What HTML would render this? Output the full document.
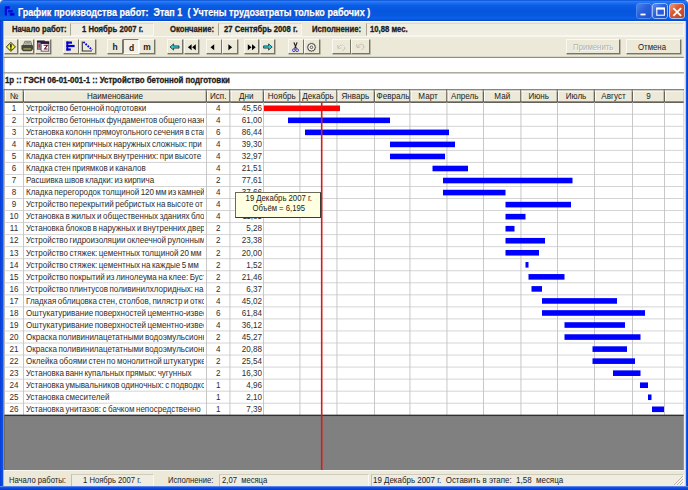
<!DOCTYPE html>
<html lang="ru"><head><meta charset="utf-8"><title>График производства работ</title>
<style>
html,body{margin:0;padding:0;}
body{width:688px;height:490px;overflow:hidden;background:#fff;position:relative;font-family:"Liberation Sans",sans-serif;font-size:8px;color:#222;}
.abs{position:absolute;}
.t{position:absolute;white-space:pre;line-height:1;}
#win{position:absolute;left:0;top:0;width:688px;height:490px;background:#ece9d8;border-radius:4px 4px 0 0;overflow:hidden;}
#title{position:absolute;left:0;top:0;width:688px;height:21.3px;background:linear-gradient(to bottom,#0a4ed2 0%,#2d7df2 7%,#1b6ff0 14%,#0b5de6 26%,#0656de 50%,#0757df 72%,#0a60ea 88%,#0747c6 100%);}
.btn{position:absolute;background:#ece9d8;box-sizing:border-box;border-top:1px solid #f9f8f2;border-left:1px solid #f9f8f2;border-right:1px solid #77756a;border-bottom:1px solid #77756a;box-shadow:0.6px 0.6px 0 #9a9888;}
.panel{position:absolute;box-sizing:border-box;}
</style></head><body>
<div id="win">

<div class="abs" style="left:0;top:21px;width:4px;height:469px;background:linear-gradient(to right,#0a3ad6 0,#0a4fe2 50%,#0a4fe2 68%,#7f9fee 72%,#b4c6f2 100%)"></div>
<div class="abs" style="left:683.8px;top:21px;width:4.2px;height:469px;background:linear-gradient(to right,#f2f1ea 0,#e4e8f4 32%,#6a90ec 50%,#0a4fe2 64%,#0a3ad6 100%)"></div>
<div class="abs" style="left:0;top:486px;width:688px;height:4px;background:linear-gradient(to top,#0a36cc 0,#0a4fe2 55%,#1a58e4 72%,#8aa8f0 100%)"></div>
<div id="title"></div>
<svg class="abs" style="left:4px;top:5px" width="12" height="12" viewBox="4 5 12 12"><path d="M4.8 6.2 H9.8 V8.7 H6.9 V15.6 H4.8 Z" fill="#0606dc"/><rect x="8.2" y="10.1" width="4.6" height="2.3" fill="#0606dc"/><rect x="9.8" y="12.9" width="4.6" height="2.8" fill="#0606dc"/></svg>
<div class="t" style="top:6.72px;font-size:10.6px;font-weight:bold;color:#fff;left:17.5px;transform:scaleX(0.855);transform-origin:0 0;text-shadow:0.6px 0.6px 0 #0a2f9a;-webkit-text-stroke:0.25px #fff;">График производства работ:  Этап 1  ( Учтены трудозатраты только рабочих )</div>
<div class="abs" style="left:637.3px;top:4.3px;width:14px;height:14.2px;border-radius:2.5px;background:linear-gradient(135deg,#4f82ec 0%,#2a60dc 45%,#1f50cc 100%);box-shadow:0 0 0 0.8px rgba(255,255,255,0.35);"></div>
<div class="abs" style="left:653.4px;top:4.3px;width:14px;height:14.2px;border-radius:2.5px;background:linear-gradient(135deg,#5f8ff0 0%,#2a60dc 45%,#1f50cc 100%);box-shadow:0 0 0 0.8px rgba(255,255,255,0.75);"></div>
<div class="abs" style="left:669.6px;top:4.3px;width:14px;height:14.2px;border-radius:2.5px;background:linear-gradient(135deg,#ee9a80 0%,#dc5a32 40%,#c0401e 100%);box-shadow:0 0 0 0.8px rgba(255,255,255,0.85);"></div>
<svg class="abs" style="left:636px;top:3px" width="50" height="17" viewBox="0 0 50 17"><rect x="4.5" y="10.6" width="5" height="1.8" fill="#fff"/><rect x="20.8" y="5.2" width="7.6" height="7" fill="none" stroke="#fff" stroke-width="1.1"/><rect x="20.2" y="4.6" width="8.8" height="2" fill="#fff"/><path d="M37.3 5.1 L45.1 12.9 M45.1 5.1 L37.3 12.9" stroke="#fff" stroke-width="1.8"/></svg>
<div class="abs" style="left:3.6px;top:21.3px;width:680.1999999999999px;height:1px;background:#fbfaf6"></div>
<div class="panel" style="left:70px;top:22.8px;width:84px;height:13.4px;background:#f0eee3;border-top:1px solid #dddaca;border-left:1px solid #a8a594;border-right:1px solid #f8f7f0;border-bottom:1px solid #f6f5ee;"></div>
<div class="panel" style="left:218.2px;top:22.8px;width:84px;height:13.4px;background:#f0eee3;border-top:1px solid #dddaca;border-left:1px solid #a8a594;border-right:1px solid #f8f7f0;border-bottom:1px solid #f6f5ee;"></div>
<div class="panel" style="left:366.4px;top:22.8px;width:317.4px;height:13.4px;background:#f0eee3;border-top:1px solid #dddaca;border-left:1px solid #a8a594;border-right:1px solid #f8f7f0;border-bottom:1px solid #f6f5ee;"></div>
<div class="t" style="top:25.00px;font-size:8.8px;font-weight:bold;left:12px;transform:scaleX(0.875);transform-origin:0 0;-webkit-text-stroke:0.3px #1a1a1a;">Начало работ:</div>
<div class="t" style="top:25.00px;font-size:8.8px;font-weight:bold;left:82px;transform:scaleX(0.875);transform-origin:0 0;-webkit-text-stroke:0.3px #1a1a1a;">1 Ноябрь 2007 г.</div>
<div class="t" style="top:25.00px;font-size:8.8px;font-weight:bold;left:169.5px;transform:scaleX(0.875);transform-origin:0 0;-webkit-text-stroke:0.3px #1a1a1a;">Окончание:</div>
<div class="t" style="top:25.00px;font-size:8.8px;font-weight:bold;left:223.5px;transform:scaleX(0.875);transform-origin:0 0;-webkit-text-stroke:0.3px #1a1a1a;">27 Сентябрь 2008 г.</div>
<div class="t" style="top:25.00px;font-size:8.8px;font-weight:bold;left:312px;transform:scaleX(0.875);transform-origin:0 0;-webkit-text-stroke:0.3px #1a1a1a;">Исполнение:</div>
<div class="t" style="top:25.00px;font-size:8.8px;font-weight:bold;left:370px;transform:scaleX(0.875);transform-origin:0 0;-webkit-text-stroke:0.3px #1a1a1a;">10,88 мес.</div>
<div class="abs" style="left:3.6px;top:36.4px;width:680.1999999999999px;height:1px;background:#f7f6ef"></div>
<div class="btn" style="left:3.6px;top:39.2px;width:14.6px;height:15px;"><svg class="abs" style="left:0.3px;top:0.6px" width="13" height="13" viewBox="0 0 13 13"><path d="M5.9 1.4 L10.4 5.9 L5.9 10.4 L1.4 5.9 Z" fill="#f8f640" stroke="#2a2a18" stroke-width="1"/><rect x="5.15" y="3.1" width="1.5" height="3.6" fill="#111"/><rect x="5.15" y="7.4" width="1.5" height="1.4" fill="#111"/></svg></div>
<div class="btn" style="left:18.8px;top:39.2px;width:15.6px;height:15px;"><svg class="abs" style="left:0;top:0" width="15" height="14" viewBox="19.8 40.2 15 14"><path d="M24.6 41.5 L30.6 41.5 L31.6 45.6 L23.2 45.6 Z" fill="#d6d6ce" stroke="#55554c" stroke-width="0.7"/><path d="M25.2 42.8 L30 42.8 M24.8 44.1 L30.6 44.1" stroke="#66665c" stroke-width="0.6"/><path d="M21.2 46.2 Q21.2 45.3 22.2 45.3 L31.8 45.3 Q32.8 45.3 32.8 46.2 L32.8 48.6 Q32.4 51.4 29.6 51.4 L24.4 51.4 Q21.6 51.4 21.2 48.6 Z" fill="#47473e"/><rect x="23" y="48.1" width="8" height="1.9" rx="0.8" fill="#8e9050"/></svg></div>
<div class="btn" style="left:35.2px;top:39.2px;width:16.2px;height:15px;"><svg class="abs" style="left:0;top:0" width="15" height="14" viewBox="36.2 40.2 15 14"><rect x="37.5" y="41.2" width="7.2" height="8.2" fill="#9c8a9c" stroke="#2a2038" stroke-width="0.6"/><rect x="37.2" y="40.9" width="7.8" height="1.8" fill="#14144e"/><rect x="38.8" y="44.3" width="1.2" height="3.4" fill="#d82020"/><rect x="41.3" y="42" width="7.7" height="9.3" fill="#fff" stroke="#2a2038" stroke-width="0.7"/><rect x="41" y="41.7" width="8.3" height="2.4" fill="#30103e"/><path d="M43.8 45.5 L47.6 45.5 L44.8 49.2 L47.8 49.2" fill="none" stroke="#6a1020" stroke-width="1.1"/></svg></div>
<div class="btn" style="left:63px;top:39.2px;width:16px;height:15px;"><svg class="abs" style="left:0;top:0" width="15" height="14" viewBox="64 40.2 15 14"><rect x="66.4" y="41.7" width="1.9" height="9" fill="#0000d4"/><rect x="66.4" y="41.7" width="5.6" height="2.2" fill="#0000d4"/><rect x="66.4" y="45.1" width="8.2" height="2.2" fill="#0000d4"/><rect x="66.4" y="48.6" width="4.4" height="2.2" fill="#0000d4"/></svg></div>
<div class="btn" style="left:79.2px;top:39.2px;width:16.4px;height:15px;"><svg class="abs" style="left:0;top:0" width="15" height="14" viewBox="80.2 40.2 15 14"><path d="M82.5 41.8 L82.5 51.2 L92 51.2" fill="none" stroke="#333" stroke-width="1.1"/><path d="M83.6 42 L92.4 50.2" stroke="#0808d8" stroke-width="1.8" stroke-dasharray="1.8 1.1"/></svg></div>
<div class="btn" style="left:107px;top:39.2px;width:16px;height:15px;"><div class="t" style="top:1.61px;font-size:9.4px;font-weight:bold;left:0px;width:14px;text-align:center;transform:scaleX(0.9);transform-origin:50% 0;">h</div></div>
<div class="btn" style="left:123px;top:39.2px;width:16px;height:15px;border-top:1px solid #7d7b6e;border-left:1px solid #7d7b6e;border-right:1px solid #fff;border-bottom:1px solid #fff;background:#f3f1e7;"><div class="t" style="top:2.61px;font-size:9.4px;font-weight:bold;left:0px;width:15.0px;text-align:center;transform:scaleX(0.9);transform-origin:50% 0;">d</div></div>
<div class="btn" style="left:139px;top:39.2px;width:16px;height:15px;"><div class="t" style="top:1.61px;font-size:9.4px;font-weight:bold;left:0px;width:14px;text-align:center;transform:scaleX(0.9);transform-origin:50% 0;">m</div></div>
<div class="btn" style="left:167.4px;top:39.2px;width:15.6px;height:15px;"><svg class="abs" style="left:-0.2px;top:1.9px" width="13" height="10" viewBox="0 0 13 10"><path d="M2 5 L5.6 1.9 L5.6 3.9 L11 3.9 L11 6.1 L5.6 6.1 L5.6 8.1 Z" fill="#22d4dc" stroke="#1a2a30" stroke-width="0.8"/></svg></div>
<div class="btn" style="left:183.6px;top:39.2px;width:15.6px;height:15px;"><svg class="abs" style="left:0px;top:2px" width="13" height="10" viewBox="0 0 13 10"><path d="M6.6 2.2 L6.6 8.2 L2.9 5.2 Z M10.8 2.2 L10.8 8.2 L7.1 5.2 Z" fill="#000"/></svg></div>
<div class="btn" style="left:206px;top:39.2px;width:15.5px;height:15px;"><svg class="abs" style="left:-0.7px;top:2px" width="13" height="10" viewBox="0 0 13 10"><path d="M8.2 2.2 L8.2 8.2 L4.5 5.2 Z" fill="#000"/></svg></div>
<div class="btn" style="left:222px;top:39.2px;width:16px;height:15px;"><svg class="abs" style="left:0.4px;top:2px" width="13" height="10" viewBox="0 0 13 10"><path d="M5.4 2.2 L5.4 8.2 L9.1 5.2 Z" fill="#000"/></svg></div>
<div class="btn" style="left:243.8px;top:39.2px;width:15.6px;height:15px;"><svg class="abs" style="left:0.2px;top:2px" width="13" height="10" viewBox="0 0 13 10"><path d="M2.8 2.2 L2.8 8.2 L6.5 5.2 Z M7 2.2 L7 8.2 L10.7 5.2 Z" fill="#000"/></svg></div>
<div class="btn" style="left:259.7px;top:39.2px;width:15.8px;height:15px;"><svg class="abs" style="left:0.6px;top:1.9px" width="13" height="10" viewBox="0 0 13 10"><path d="M11.2 5 L7.6 1.9 L7.6 3.9 L2.6 3.9 L2.6 6.1 L7.6 6.1 L7.6 8.1 Z" fill="#22d4dc" stroke="#1a2a30" stroke-width="0.8"/></svg></div>
<div class="btn" style="left:288px;top:39.2px;width:15.5px;height:15px;"><svg class="abs" style="left:0.2px;top:0.5px" width="13" height="13" viewBox="0 0 13 13"><path d="M4.9 1.4 L7.4 7.6 M8.1 1.4 L5.6 7.6" stroke="#222" stroke-width="1.2" fill="none"/><circle cx="4.9" cy="9.2" r="1.4" fill="none" stroke="#4438c0" stroke-width="1"/><circle cx="8.1" cy="9.2" r="1.4" fill="none" stroke="#4438c0" stroke-width="1"/></svg></div>
<div class="btn" style="left:304px;top:39.2px;width:15.5px;height:15px;"><svg class="abs" style="left:0.3px;top:0.5px" width="13" height="13" viewBox="0 0 13 13"><circle cx="6.5" cy="6.3" r="3.8" fill="#f4f2ea" stroke="#3a3a34" stroke-width="0.9"/><circle cx="6.5" cy="6.3" r="4.3" fill="none" stroke="#55554c" stroke-width="0.6" stroke-dasharray="1 1"/><circle cx="6.5" cy="6.3" r="1.3" fill="none" stroke="#3a3a34" stroke-width="0.8"/></svg></div>
<div class="btn" style="left:332px;top:39.2px;width:18.5px;height:15px;"><svg class="abs" style="left:2px;top:0.5px" width="13" height="13" viewBox="0 0 13 13"><path d="M3.4 7.2 C4.4 3.8 8.8 3.4 9.8 6 C10.3 7.8 9 9.2 7.6 9.6" fill="none" stroke="#c2bfb0" stroke-width="1"/><path d="M2.6 4.2 L3.2 7.8 L6.4 6.8" fill="none" stroke="#c2bfb0" stroke-width="1"/><path d="M4 7.8 C5 4.4 9.4 4 10.4 6.6" fill="none" stroke="#fff" stroke-width="0.6"/></svg></div>
<div class="btn" style="left:351.2px;top:39.2px;width:19px;height:15px;"><svg class="abs" style="left:2px;top:0.5px" width="13" height="13" viewBox="0 0 13 13"><path d="M3.4 6.2 C4.4 2.8 8.8 2.4 9.8 5 C10.3 6.8 9 8.2 7.6 8.6" fill="none" stroke="#c2bfb0" stroke-width="1"/><path d="M2.6 3.2 L3.2 6.8 L6.4 5.8" fill="none" stroke="#c2bfb0" stroke-width="1"/></svg></div>
<div class="btn" style="left:565.5px;top:38.6px;width:54.5px;height:15.8px;"><div class="t" style="top:2.95px;font-size:8.7px;color:#b4b1a0;left:0px;width:52.5px;text-align:center;transform:scaleX(0.9);transform-origin:50% 0;text-shadow:0.6px 0.6px 0 #fff;">Применить</div></div>
<div class="btn" style="left:625.5px;top:38.6px;width:55px;height:15.8px;"><div class="t" style="top:2.95px;font-size:8.7px;left:0px;width:50px;text-align:center;transform:scaleX(0.9);transform-origin:50% 0;">Отмена</div></div>
<svg class="abs" style="left:0;top:56px" width="688" height="414" viewBox="0 56 688 414">
<rect x="3.6" y="56.8" width="680.1999999999999" height="1.2" fill="#8e8c7c"/>
<rect x="3.6" y="58" width="680.1999999999999" height="14" fill="#fff"/>
<rect x="3.6" y="72" width="680.1999999999999" height="1.7" fill="#aeac9e"/>
<rect x="3.6" y="73.7" width="680.1999999999999" height="15.4" fill="#fff"/>
<rect x="3.6" y="57" width="0.8" height="32" fill="#8e8c7c"/>
<rect x="3.6" y="89" width="680.1999999999999" height="381" fill="#808080"/>
<rect x="3.6" y="89.1" width="680.1999999999999" height="1.5" fill="#8a887a"/>
<rect x="3.6" y="89" width="1.2" height="381" fill="#6a6860"/>
<rect x="4.5" y="90.6" width="679.2" height="11.600000000000009" fill="#ece9d8"/>
<rect x="4.5" y="102.2" width="679.2" height="313.03999999999996" fill="#fff"/>
<rect x="4.5" y="90.6" width="19.0" height="0.9" fill="#fff"/>
<rect x="5.1" y="90.6" width="0.9" height="11.600000000000009" fill="#fff"/>
<rect x="22.7" y="89.6" width="1.4" height="12.600000000000009" fill="#66645a"/>
<rect x="23.5" y="90.6" width="183.0" height="0.9" fill="#fff"/>
<rect x="24.1" y="90.6" width="0.9" height="11.600000000000009" fill="#fff"/>
<rect x="205.7" y="89.6" width="1.4" height="12.600000000000009" fill="#66645a"/>
<rect x="206.5" y="90.6" width="23.5" height="0.9" fill="#fff"/>
<rect x="207.1" y="90.6" width="0.9" height="11.600000000000009" fill="#fff"/>
<rect x="229.2" y="89.6" width="1.4" height="12.600000000000009" fill="#66645a"/>
<rect x="230" y="90.6" width="33.5" height="0.9" fill="#fff"/>
<rect x="230.6" y="90.6" width="0.9" height="11.600000000000009" fill="#fff"/>
<rect x="262.7" y="89.6" width="1.4" height="12.600000000000009" fill="#66645a"/>
<rect x="263.5" y="90.6" width="36.5" height="0.9" fill="#fff"/>
<rect x="264.1" y="90.6" width="0.9" height="11.600000000000009" fill="#fff"/>
<rect x="299.2" y="89.6" width="1.4" height="12.600000000000009" fill="#66645a"/>
<rect x="300" y="90.6" width="37" height="0.9" fill="#fff"/>
<rect x="300.6" y="90.6" width="0.9" height="11.600000000000009" fill="#fff"/>
<rect x="336.2" y="89.6" width="1.4" height="12.600000000000009" fill="#66645a"/>
<rect x="337" y="90.6" width="37.5" height="0.9" fill="#fff"/>
<rect x="337.6" y="90.6" width="0.9" height="11.600000000000009" fill="#fff"/>
<rect x="373.7" y="89.6" width="1.4" height="12.600000000000009" fill="#66645a"/>
<rect x="374.5" y="90.6" width="35.5" height="0.9" fill="#fff"/>
<rect x="375.1" y="90.6" width="0.9" height="11.600000000000009" fill="#fff"/>
<rect x="409.2" y="89.6" width="1.4" height="12.600000000000009" fill="#66645a"/>
<rect x="410" y="90.6" width="37" height="0.9" fill="#fff"/>
<rect x="410.6" y="90.6" width="0.9" height="11.600000000000009" fill="#fff"/>
<rect x="446.2" y="89.6" width="1.4" height="12.600000000000009" fill="#66645a"/>
<rect x="447" y="90.6" width="36.5" height="0.9" fill="#fff"/>
<rect x="447.6" y="90.6" width="0.9" height="11.600000000000009" fill="#fff"/>
<rect x="482.7" y="89.6" width="1.4" height="12.600000000000009" fill="#66645a"/>
<rect x="483.5" y="90.6" width="37.5" height="0.9" fill="#fff"/>
<rect x="484.1" y="90.6" width="0.9" height="11.600000000000009" fill="#fff"/>
<rect x="520.2" y="89.6" width="1.4" height="12.600000000000009" fill="#66645a"/>
<rect x="521" y="90.6" width="36.5" height="0.9" fill="#fff"/>
<rect x="521.6" y="90.6" width="0.9" height="11.600000000000009" fill="#fff"/>
<rect x="556.7" y="89.6" width="1.4" height="12.600000000000009" fill="#66645a"/>
<rect x="557.5" y="90.6" width="37.0" height="0.9" fill="#fff"/>
<rect x="558.1" y="90.6" width="0.9" height="11.600000000000009" fill="#fff"/>
<rect x="593.7" y="89.6" width="1.4" height="12.600000000000009" fill="#66645a"/>
<rect x="594.5" y="90.6" width="38.0" height="0.9" fill="#fff"/>
<rect x="595.1" y="90.6" width="0.9" height="11.600000000000009" fill="#fff"/>
<rect x="631.7" y="89.6" width="1.4" height="12.600000000000009" fill="#66645a"/>
<rect x="632.5" y="90.6" width="32.0" height="0.9" fill="#fff"/>
<rect x="633.1" y="90.6" width="0.9" height="11.600000000000009" fill="#fff"/>
<rect x="663.7" y="89.6" width="1.4" height="12.600000000000009" fill="#66645a"/>
<rect x="664.5" y="90.6" width="19.200000000000045" height="0.9" fill="#fff"/>
<rect x="665.1" y="90.6" width="0.9" height="11.600000000000009" fill="#fff"/>
<rect x="4.5" y="101.4" width="679.2" height="1.5" fill="#55534a"/>
<rect x="4.5" y="113.79" width="679.2" height="0.9" fill="#d0d0d0"/>
<rect x="4.5" y="125.83" width="679.2" height="0.9" fill="#d0d0d0"/>
<rect x="4.5" y="137.87" width="679.2" height="0.9" fill="#d0d0d0"/>
<rect x="4.5" y="149.91" width="679.2" height="0.9" fill="#d0d0d0"/>
<rect x="4.5" y="161.95" width="679.2" height="0.9" fill="#d0d0d0"/>
<rect x="4.5" y="173.99" width="679.2" height="0.9" fill="#d0d0d0"/>
<rect x="4.5" y="186.03" width="679.2" height="0.9" fill="#d0d0d0"/>
<rect x="4.5" y="198.07" width="679.2" height="0.9" fill="#d0d0d0"/>
<rect x="4.5" y="210.11" width="679.2" height="0.9" fill="#d0d0d0"/>
<rect x="4.5" y="222.15" width="679.2" height="0.9" fill="#d0d0d0"/>
<rect x="4.5" y="234.19" width="679.2" height="0.9" fill="#d0d0d0"/>
<rect x="4.5" y="246.23" width="679.2" height="0.9" fill="#d0d0d0"/>
<rect x="4.5" y="258.27" width="679.2" height="0.9" fill="#d0d0d0"/>
<rect x="4.5" y="270.31" width="679.2" height="0.9" fill="#d0d0d0"/>
<rect x="4.5" y="282.35" width="679.2" height="0.9" fill="#d0d0d0"/>
<rect x="4.5" y="294.39" width="679.2" height="0.9" fill="#d0d0d0"/>
<rect x="4.5" y="306.43" width="679.2" height="0.9" fill="#d0d0d0"/>
<rect x="4.5" y="318.47" width="679.2" height="0.9" fill="#d0d0d0"/>
<rect x="4.5" y="330.51" width="679.2" height="0.9" fill="#d0d0d0"/>
<rect x="4.5" y="342.55" width="679.2" height="0.9" fill="#d0d0d0"/>
<rect x="4.5" y="354.59" width="679.2" height="0.9" fill="#d0d0d0"/>
<rect x="4.5" y="366.63" width="679.2" height="0.9" fill="#d0d0d0"/>
<rect x="4.5" y="378.67" width="679.2" height="0.9" fill="#d0d0d0"/>
<rect x="4.5" y="390.71" width="679.2" height="0.9" fill="#d0d0d0"/>
<rect x="4.5" y="402.75" width="679.2" height="0.9" fill="#d0d0d0"/>
<rect x="23.00" y="102.2" width="0.9" height="313.04" fill="#c2c2c2"/>
<rect x="206.00" y="102.2" width="0.9" height="313.04" fill="#c2c2c2"/>
<rect x="229.50" y="102.2" width="0.9" height="313.04" fill="#c2c2c2"/>
<rect x="263.00" y="102.2" width="0.9" height="313.04" fill="#c2c2c2"/>
<rect x="299.50" y="102.2" width="0.9" height="313.04" fill="#c2c2c2"/>
<rect x="336.50" y="102.2" width="0.9" height="313.04" fill="#c2c2c2"/>
<rect x="374.00" y="102.2" width="0.9" height="313.04" fill="#c2c2c2"/>
<rect x="409.50" y="102.2" width="0.9" height="313.04" fill="#c2c2c2"/>
<rect x="446.50" y="102.2" width="0.9" height="313.04" fill="#c2c2c2"/>
<rect x="483.00" y="102.2" width="0.9" height="313.04" fill="#c2c2c2"/>
<rect x="520.50" y="102.2" width="0.9" height="313.04" fill="#c2c2c2"/>
<rect x="557.00" y="102.2" width="0.9" height="313.04" fill="#c2c2c2"/>
<rect x="594.00" y="102.2" width="0.9" height="313.04" fill="#c2c2c2"/>
<rect x="632.00" y="102.2" width="0.9" height="313.04" fill="#c2c2c2"/>
<rect x="664.00" y="102.2" width="0.9" height="313.04" fill="#c2c2c2"/>
<rect x="4.5" y="414.64" width="679.2" height="1.4" fill="#303030"/>
<rect x="264" y="105.50" width="76" height="5.6" fill="#ff0000"/>
<rect x="288" y="117.54" width="102" height="5.6" fill="#0000ff"/>
<rect x="305" y="129.58" width="144" height="5.6" fill="#0000ff"/>
<rect x="390" y="141.62" width="65" height="5.6" fill="#0000ff"/>
<rect x="390" y="153.66" width="55" height="5.6" fill="#0000ff"/>
<rect x="432.5" y="165.70" width="35.5" height="5.6" fill="#0000ff"/>
<rect x="443" y="177.74" width="129.5" height="5.6" fill="#0000ff"/>
<rect x="443" y="189.78" width="62.5" height="5.6" fill="#0000ff"/>
<rect x="505.5" y="201.82" width="65.5" height="5.6" fill="#0000ff"/>
<rect x="505.5" y="213.86" width="20.0" height="5.6" fill="#0000ff"/>
<rect x="505.5" y="225.90" width="9.0" height="5.6" fill="#0000ff"/>
<rect x="505.5" y="237.94" width="39.5" height="5.6" fill="#0000ff"/>
<rect x="505.5" y="249.98" width="33.5" height="5.6" fill="#0000ff"/>
<rect x="525.5" y="262.02" width="3.0" height="5.6" fill="#0000ff"/>
<rect x="528.5" y="274.06" width="36.0" height="5.6" fill="#0000ff"/>
<rect x="531.5" y="286.10" width="10.5" height="5.6" fill="#0000ff"/>
<rect x="542" y="298.14" width="75" height="5.6" fill="#0000ff"/>
<rect x="542" y="310.18" width="103" height="5.6" fill="#0000ff"/>
<rect x="564.5" y="322.22" width="60.5" height="5.6" fill="#0000ff"/>
<rect x="564.5" y="334.26" width="76.0" height="5.6" fill="#0000ff"/>
<rect x="592.5" y="346.30" width="34.5" height="5.6" fill="#0000ff"/>
<rect x="592.5" y="358.34" width="42.5" height="5.6" fill="#0000ff"/>
<rect x="613" y="370.38" width="27.5" height="5.6" fill="#0000ff"/>
<rect x="640" y="382.42" width="8" height="5.6" fill="#0000ff"/>
<rect x="648" y="394.46" width="3.5" height="5.6" fill="#0000ff"/>
<rect x="652" y="406.50" width="12" height="5.6" fill="#0000ff"/>
<rect x="320.9" y="102.2" width="1.6" height="368.1" fill="#d41c1c"/>
</svg>
<div class="t" style="top:75.75px;font-size:8.9px;font-weight:bold;left:4.5px;transform:scaleX(0.885);transform-origin:0 0;-webkit-text-stroke:0.3px #1a1a1a;">1p :: ГЭСН 06-01-001-1 :: Устройство бетонной подготовки</div>
<div class="t" style="top:91.95px;font-size:8.9px;left:4.5px;width:18.0px;text-align:center;transform:scaleX(0.91);transform-origin:50% 0;">№</div>
<div class="t" style="top:91.95px;font-size:8.9px;left:23.5px;width:182.0px;text-align:center;transform:scaleX(0.91);transform-origin:50% 0;">Наименование</div>
<div class="t" style="top:91.95px;font-size:8.9px;left:206.5px;width:22.5px;text-align:center;transform:scaleX(0.91);transform-origin:50% 0;">Исп.</div>
<div class="t" style="top:91.95px;font-size:8.9px;left:230px;width:32.5px;text-align:center;transform:scaleX(0.91);transform-origin:50% 0;">Дни</div>
<div class="t" style="top:91.95px;font-size:8.9px;left:263.5px;width:35.5px;text-align:center;transform:scaleX(0.91);transform-origin:50% 0;">Ноябрь</div>
<div class="t" style="top:91.95px;font-size:8.9px;left:300px;width:36px;text-align:center;transform:scaleX(0.91);transform-origin:50% 0;">Декабрь</div>
<div class="t" style="top:91.95px;font-size:8.9px;left:337px;width:36.5px;text-align:center;transform:scaleX(0.91);transform-origin:50% 0;">Январь</div>
<div class="t" style="top:91.95px;font-size:8.9px;left:374.5px;width:34.5px;text-align:center;transform:scaleX(0.91);transform-origin:50% 0;">Февраль</div>
<div class="t" style="top:91.95px;font-size:8.9px;left:410px;width:36px;text-align:center;transform:scaleX(0.91);transform-origin:50% 0;">Март</div>
<div class="t" style="top:91.95px;font-size:8.9px;left:447px;width:35.5px;text-align:center;transform:scaleX(0.91);transform-origin:50% 0;">Апрель</div>
<div class="t" style="top:91.95px;font-size:8.9px;left:483.5px;width:36.5px;text-align:center;transform:scaleX(0.91);transform-origin:50% 0;">Май</div>
<div class="t" style="top:91.95px;font-size:8.9px;left:521px;width:35.5px;text-align:center;transform:scaleX(0.91);transform-origin:50% 0;">Июнь</div>
<div class="t" style="top:91.95px;font-size:8.9px;left:557.5px;width:36.0px;text-align:center;transform:scaleX(0.91);transform-origin:50% 0;">Июль</div>
<div class="t" style="top:91.95px;font-size:8.9px;left:594.5px;width:37.0px;text-align:center;transform:scaleX(0.91);transform-origin:50% 0;">Август</div>
<div class="t" style="top:91.95px;font-size:8.9px;left:632.5px;width:31.0px;text-align:center;transform:scaleX(0.91);transform-origin:50% 0;">9</div>
<div class="t" style="top:104.05px;font-size:8.9px;color:#2e2e2e;left:4.5px;width:18.0px;text-align:center;transform:scaleX(0.91);transform-origin:50% 0;">1</div>
<div class="t" style="left:26.0px;width:178.2px;overflow:hidden;top:104.05px;font-size:8.9px;height:10.9px;color:#2e2e2e"><span style="display:inline-block;transform:scaleX(0.905);transform-origin:0 0;word-spacing:-0.8px">Устройство бетонной подготовки</span></div>
<div class="t" style="top:104.05px;font-size:8.9px;color:#2e2e2e;left:206.5px;width:22.5px;text-align:center;transform:scaleX(0.91);transform-origin:50% 0;">4</div>
<div class="t" style="top:104.05px;font-size:8.9px;color:#2e2e2e;left:230px;width:32.0px;text-align:right;transform:scaleX(0.91);transform-origin:100% 0;">45,56</div>
<div class="t" style="top:116.09px;font-size:8.9px;color:#2e2e2e;left:4.5px;width:18.0px;text-align:center;transform:scaleX(0.91);transform-origin:50% 0;">2</div>
<div class="t" style="left:26.0px;width:178.2px;overflow:hidden;top:116.09px;font-size:8.9px;height:10.9px;color:#2e2e2e"><span style="display:inline-block;transform:scaleX(0.905);transform-origin:0 0;word-spacing:-0.8px">Устройство бетонных фундаментов общего назначения</span></div>
<div class="t" style="top:116.09px;font-size:8.9px;color:#2e2e2e;left:206.5px;width:22.5px;text-align:center;transform:scaleX(0.91);transform-origin:50% 0;">4</div>
<div class="t" style="top:116.09px;font-size:8.9px;color:#2e2e2e;left:230px;width:32.0px;text-align:right;transform:scaleX(0.91);transform-origin:100% 0;">61,00</div>
<div class="t" style="top:128.13px;font-size:8.9px;color:#2e2e2e;left:4.5px;width:18.0px;text-align:center;transform:scaleX(0.91);transform-origin:50% 0;">3</div>
<div class="t" style="left:26.0px;width:178.2px;overflow:hidden;top:128.13px;font-size:8.9px;height:10.9px;color:#2e2e2e"><span style="display:inline-block;transform:scaleX(0.905);transform-origin:0 0;word-spacing:-0.8px">Установка колонн прямоугольного сечения в стаканы</span></div>
<div class="t" style="top:128.13px;font-size:8.9px;color:#2e2e2e;left:206.5px;width:22.5px;text-align:center;transform:scaleX(0.91);transform-origin:50% 0;">6</div>
<div class="t" style="top:128.13px;font-size:8.9px;color:#2e2e2e;left:230px;width:32.0px;text-align:right;transform:scaleX(0.91);transform-origin:100% 0;">86,44</div>
<div class="t" style="top:140.17px;font-size:8.9px;color:#2e2e2e;left:4.5px;width:18.0px;text-align:center;transform:scaleX(0.91);transform-origin:50% 0;">4</div>
<div class="t" style="left:26.0px;width:178.2px;overflow:hidden;top:140.17px;font-size:8.9px;height:10.9px;color:#2e2e2e"><span style="display:inline-block;transform:scaleX(0.905);transform-origin:0 0;word-spacing:-0.8px">Кладка стен кирпичных наружных сложных: при</span></div>
<div class="t" style="top:140.17px;font-size:8.9px;color:#2e2e2e;left:206.5px;width:22.5px;text-align:center;transform:scaleX(0.91);transform-origin:50% 0;">4</div>
<div class="t" style="top:140.17px;font-size:8.9px;color:#2e2e2e;left:230px;width:32.0px;text-align:right;transform:scaleX(0.91);transform-origin:100% 0;">39,30</div>
<div class="t" style="top:152.21px;font-size:8.9px;color:#2e2e2e;left:4.5px;width:18.0px;text-align:center;transform:scaleX(0.91);transform-origin:50% 0;">5</div>
<div class="t" style="left:26.0px;width:178.2px;overflow:hidden;top:152.21px;font-size:8.9px;height:10.9px;color:#2e2e2e"><span style="display:inline-block;transform:scaleX(0.905);transform-origin:0 0;word-spacing:-0.8px">Кладка стен кирпичных внутренних: при высоте</span></div>
<div class="t" style="top:152.21px;font-size:8.9px;color:#2e2e2e;left:206.5px;width:22.5px;text-align:center;transform:scaleX(0.91);transform-origin:50% 0;">4</div>
<div class="t" style="top:152.21px;font-size:8.9px;color:#2e2e2e;left:230px;width:32.0px;text-align:right;transform:scaleX(0.91);transform-origin:100% 0;">32,97</div>
<div class="t" style="top:164.25px;font-size:8.9px;color:#2e2e2e;left:4.5px;width:18.0px;text-align:center;transform:scaleX(0.91);transform-origin:50% 0;">6</div>
<div class="t" style="left:26.0px;width:178.2px;overflow:hidden;top:164.25px;font-size:8.9px;height:10.9px;color:#2e2e2e"><span style="display:inline-block;transform:scaleX(0.905);transform-origin:0 0;word-spacing:-0.8px">Кладка стен приямков и каналов</span></div>
<div class="t" style="top:164.25px;font-size:8.9px;color:#2e2e2e;left:206.5px;width:22.5px;text-align:center;transform:scaleX(0.91);transform-origin:50% 0;">4</div>
<div class="t" style="top:164.25px;font-size:8.9px;color:#2e2e2e;left:230px;width:32.0px;text-align:right;transform:scaleX(0.91);transform-origin:100% 0;">21,51</div>
<div class="t" style="top:176.29px;font-size:8.9px;color:#2e2e2e;left:4.5px;width:18.0px;text-align:center;transform:scaleX(0.91);transform-origin:50% 0;">7</div>
<div class="t" style="left:26.0px;width:178.2px;overflow:hidden;top:176.29px;font-size:8.9px;height:10.9px;color:#2e2e2e"><span style="display:inline-block;transform:scaleX(0.905);transform-origin:0 0;word-spacing:-0.8px">Расшивка швов кладки: из кирпича</span></div>
<div class="t" style="top:176.29px;font-size:8.9px;color:#2e2e2e;left:206.5px;width:22.5px;text-align:center;transform:scaleX(0.91);transform-origin:50% 0;">2</div>
<div class="t" style="top:176.29px;font-size:8.9px;color:#2e2e2e;left:230px;width:32.0px;text-align:right;transform:scaleX(0.91);transform-origin:100% 0;">77,61</div>
<div class="t" style="top:188.33px;font-size:8.9px;color:#2e2e2e;left:4.5px;width:18.0px;text-align:center;transform:scaleX(0.91);transform-origin:50% 0;">8</div>
<div class="t" style="left:26.0px;width:178.2px;overflow:hidden;top:188.33px;font-size:8.9px;height:10.9px;color:#2e2e2e"><span style="display:inline-block;transform:scaleX(0.905);transform-origin:0 0;word-spacing:-0.8px">Кладка перегородок толщиной 120 мм из камней</span></div>
<div class="t" style="top:188.33px;font-size:8.9px;color:#2e2e2e;left:206.5px;width:22.5px;text-align:center;transform:scaleX(0.91);transform-origin:50% 0;">4</div>
<div class="t" style="top:188.33px;font-size:8.9px;color:#2e2e2e;left:230px;width:32.0px;text-align:right;transform:scaleX(0.91);transform-origin:100% 0;">37,66</div>
<div class="t" style="top:200.37px;font-size:8.9px;color:#2e2e2e;left:4.5px;width:18.0px;text-align:center;transform:scaleX(0.91);transform-origin:50% 0;">9</div>
<div class="t" style="left:26.0px;width:178.2px;overflow:hidden;top:200.37px;font-size:8.9px;height:10.9px;color:#2e2e2e"><span style="display:inline-block;transform:scaleX(0.905);transform-origin:0 0;word-spacing:-0.8px">Устройство перекрытий ребристых на высоте от опорной</span></div>
<div class="t" style="top:200.37px;font-size:8.9px;color:#2e2e2e;left:206.5px;width:22.5px;text-align:center;transform:scaleX(0.91);transform-origin:50% 0;">4</div>
<div class="t" style="top:200.37px;font-size:8.9px;color:#2e2e2e;left:230px;width:32.0px;text-align:right;transform:scaleX(0.91);transform-origin:100% 0;">38,80</div>
<div class="t" style="top:212.41px;font-size:8.9px;color:#2e2e2e;left:4.5px;width:18.0px;text-align:center;transform:scaleX(0.91);transform-origin:50% 0;">10</div>
<div class="t" style="left:26.0px;width:178.2px;overflow:hidden;top:212.41px;font-size:8.9px;height:10.9px;color:#2e2e2e"><span style="display:inline-block;transform:scaleX(0.905);transform-origin:0 0;word-spacing:-0.8px">Установка в жилых и общественных зданиях блоков</span></div>
<div class="t" style="top:212.41px;font-size:8.9px;color:#2e2e2e;left:206.5px;width:22.5px;text-align:center;transform:scaleX(0.91);transform-origin:50% 0;">4</div>
<div class="t" style="top:212.41px;font-size:8.9px;color:#2e2e2e;left:230px;width:32.0px;text-align:right;transform:scaleX(0.91);transform-origin:100% 0;">11,85</div>
<div class="t" style="top:224.45px;font-size:8.9px;color:#2e2e2e;left:4.5px;width:18.0px;text-align:center;transform:scaleX(0.91);transform-origin:50% 0;">11</div>
<div class="t" style="left:26.0px;width:178.2px;overflow:hidden;top:224.45px;font-size:8.9px;height:10.9px;color:#2e2e2e"><span style="display:inline-block;transform:scaleX(0.905);transform-origin:0 0;word-spacing:-0.8px">Установка блоков в наружных и внутренних дверных</span></div>
<div class="t" style="top:224.45px;font-size:8.9px;color:#2e2e2e;left:206.5px;width:22.5px;text-align:center;transform:scaleX(0.91);transform-origin:50% 0;">2</div>
<div class="t" style="top:224.45px;font-size:8.9px;color:#2e2e2e;left:230px;width:32.0px;text-align:right;transform:scaleX(0.91);transform-origin:100% 0;">5,28</div>
<div class="t" style="top:236.49px;font-size:8.9px;color:#2e2e2e;left:4.5px;width:18.0px;text-align:center;transform:scaleX(0.91);transform-origin:50% 0;">12</div>
<div class="t" style="left:26.0px;width:178.2px;overflow:hidden;top:236.49px;font-size:8.9px;height:10.9px;color:#2e2e2e"><span style="display:inline-block;transform:scaleX(0.905);transform-origin:0 0;word-spacing:-0.8px">Устройство гидроизоляции оклеечной рулонными материалами</span></div>
<div class="t" style="top:236.49px;font-size:8.9px;color:#2e2e2e;left:206.5px;width:22.5px;text-align:center;transform:scaleX(0.91);transform-origin:50% 0;">2</div>
<div class="t" style="top:236.49px;font-size:8.9px;color:#2e2e2e;left:230px;width:32.0px;text-align:right;transform:scaleX(0.91);transform-origin:100% 0;">23,38</div>
<div class="t" style="top:248.53px;font-size:8.9px;color:#2e2e2e;left:4.5px;width:18.0px;text-align:center;transform:scaleX(0.91);transform-origin:50% 0;">13</div>
<div class="t" style="left:26.0px;width:178.2px;overflow:hidden;top:248.53px;font-size:8.9px;height:10.9px;color:#2e2e2e"><span style="display:inline-block;transform:scaleX(0.905);transform-origin:0 0;word-spacing:-0.8px">Устройство стяжек: цементных толщиной 20 мм</span></div>
<div class="t" style="top:248.53px;font-size:8.9px;color:#2e2e2e;left:206.5px;width:22.5px;text-align:center;transform:scaleX(0.91);transform-origin:50% 0;">2</div>
<div class="t" style="top:248.53px;font-size:8.9px;color:#2e2e2e;left:230px;width:32.0px;text-align:right;transform:scaleX(0.91);transform-origin:100% 0;">20,00</div>
<div class="t" style="top:260.57px;font-size:8.9px;color:#2e2e2e;left:4.5px;width:18.0px;text-align:center;transform:scaleX(0.91);transform-origin:50% 0;">14</div>
<div class="t" style="left:26.0px;width:178.2px;overflow:hidden;top:260.57px;font-size:8.9px;height:10.9px;color:#2e2e2e"><span style="display:inline-block;transform:scaleX(0.905);transform-origin:0 0;word-spacing:-0.8px">Устройство стяжек: цементных на каждые 5 мм</span></div>
<div class="t" style="top:260.57px;font-size:8.9px;color:#2e2e2e;left:206.5px;width:22.5px;text-align:center;transform:scaleX(0.91);transform-origin:50% 0;">2</div>
<div class="t" style="top:260.57px;font-size:8.9px;color:#2e2e2e;left:230px;width:32.0px;text-align:right;transform:scaleX(0.91);transform-origin:100% 0;">1,52</div>
<div class="t" style="top:272.61px;font-size:8.9px;color:#2e2e2e;left:4.5px;width:18.0px;text-align:center;transform:scaleX(0.91);transform-origin:50% 0;">15</div>
<div class="t" style="left:26.0px;width:178.2px;overflow:hidden;top:272.61px;font-size:8.9px;height:10.9px;color:#2e2e2e"><span style="display:inline-block;transform:scaleX(0.905);transform-origin:0 0;word-spacing:-0.8px">Устройство покрытий из линолеума на клее: Бустилат</span></div>
<div class="t" style="top:272.61px;font-size:8.9px;color:#2e2e2e;left:206.5px;width:22.5px;text-align:center;transform:scaleX(0.91);transform-origin:50% 0;">2</div>
<div class="t" style="top:272.61px;font-size:8.9px;color:#2e2e2e;left:230px;width:32.0px;text-align:right;transform:scaleX(0.91);transform-origin:100% 0;">21,46</div>
<div class="t" style="top:284.65px;font-size:8.9px;color:#2e2e2e;left:4.5px;width:18.0px;text-align:center;transform:scaleX(0.91);transform-origin:50% 0;">16</div>
<div class="t" style="left:26.0px;width:178.2px;overflow:hidden;top:284.65px;font-size:8.9px;height:10.9px;color:#2e2e2e"><span style="display:inline-block;transform:scaleX(0.905);transform-origin:0 0;word-spacing:-0.8px">Устройство плинтусов поливинилхлоридных: на</span></div>
<div class="t" style="top:284.65px;font-size:8.9px;color:#2e2e2e;left:206.5px;width:22.5px;text-align:center;transform:scaleX(0.91);transform-origin:50% 0;">2</div>
<div class="t" style="top:284.65px;font-size:8.9px;color:#2e2e2e;left:230px;width:32.0px;text-align:right;transform:scaleX(0.91);transform-origin:100% 0;">6,37</div>
<div class="t" style="top:296.69px;font-size:8.9px;color:#2e2e2e;left:4.5px;width:18.0px;text-align:center;transform:scaleX(0.91);transform-origin:50% 0;">17</div>
<div class="t" style="left:26.0px;width:178.2px;overflow:hidden;top:296.69px;font-size:8.9px;height:10.9px;color:#2e2e2e"><span style="display:inline-block;transform:scaleX(0.905);transform-origin:0 0;word-spacing:-0.8px">Гладкая облицовка стен, столбов, пилястр и откосов</span></div>
<div class="t" style="top:296.69px;font-size:8.9px;color:#2e2e2e;left:206.5px;width:22.5px;text-align:center;transform:scaleX(0.91);transform-origin:50% 0;">4</div>
<div class="t" style="top:296.69px;font-size:8.9px;color:#2e2e2e;left:230px;width:32.0px;text-align:right;transform:scaleX(0.91);transform-origin:100% 0;">45,02</div>
<div class="t" style="top:308.73px;font-size:8.9px;color:#2e2e2e;left:4.5px;width:18.0px;text-align:center;transform:scaleX(0.91);transform-origin:50% 0;">18</div>
<div class="t" style="left:26.0px;width:178.2px;overflow:hidden;top:308.73px;font-size:8.9px;height:10.9px;color:#2e2e2e"><span style="display:inline-block;transform:scaleX(0.905);transform-origin:0 0;word-spacing:-0.8px">Оштукатуривание поверхностей цементно-известковым</span></div>
<div class="t" style="top:308.73px;font-size:8.9px;color:#2e2e2e;left:206.5px;width:22.5px;text-align:center;transform:scaleX(0.91);transform-origin:50% 0;">6</div>
<div class="t" style="top:308.73px;font-size:8.9px;color:#2e2e2e;left:230px;width:32.0px;text-align:right;transform:scaleX(0.91);transform-origin:100% 0;">61,84</div>
<div class="t" style="top:320.77px;font-size:8.9px;color:#2e2e2e;left:4.5px;width:18.0px;text-align:center;transform:scaleX(0.91);transform-origin:50% 0;">19</div>
<div class="t" style="left:26.0px;width:178.2px;overflow:hidden;top:320.77px;font-size:8.9px;height:10.9px;color:#2e2e2e"><span style="display:inline-block;transform:scaleX(0.905);transform-origin:0 0;word-spacing:-0.8px">Оштукатуривание поверхностей цементно-известковым</span></div>
<div class="t" style="top:320.77px;font-size:8.9px;color:#2e2e2e;left:206.5px;width:22.5px;text-align:center;transform:scaleX(0.91);transform-origin:50% 0;">4</div>
<div class="t" style="top:320.77px;font-size:8.9px;color:#2e2e2e;left:230px;width:32.0px;text-align:right;transform:scaleX(0.91);transform-origin:100% 0;">36,12</div>
<div class="t" style="top:332.81px;font-size:8.9px;color:#2e2e2e;left:4.5px;width:18.0px;text-align:center;transform:scaleX(0.91);transform-origin:50% 0;">20</div>
<div class="t" style="left:26.0px;width:178.2px;overflow:hidden;top:332.81px;font-size:8.9px;height:10.9px;color:#2e2e2e"><span style="display:inline-block;transform:scaleX(0.905);transform-origin:0 0;word-spacing:-0.8px">Окраска поливинилацетатными водоэмульсионными составами</span></div>
<div class="t" style="top:332.81px;font-size:8.9px;color:#2e2e2e;left:206.5px;width:22.5px;text-align:center;transform:scaleX(0.91);transform-origin:50% 0;">2</div>
<div class="t" style="top:332.81px;font-size:8.9px;color:#2e2e2e;left:230px;width:32.0px;text-align:right;transform:scaleX(0.91);transform-origin:100% 0;">45,27</div>
<div class="t" style="top:344.85px;font-size:8.9px;color:#2e2e2e;left:4.5px;width:18.0px;text-align:center;transform:scaleX(0.91);transform-origin:50% 0;">21</div>
<div class="t" style="left:26.0px;width:178.2px;overflow:hidden;top:344.85px;font-size:8.9px;height:10.9px;color:#2e2e2e"><span style="display:inline-block;transform:scaleX(0.905);transform-origin:0 0;word-spacing:-0.8px">Окраска поливинилацетатными водоэмульсионными составами</span></div>
<div class="t" style="top:344.85px;font-size:8.9px;color:#2e2e2e;left:206.5px;width:22.5px;text-align:center;transform:scaleX(0.91);transform-origin:50% 0;">4</div>
<div class="t" style="top:344.85px;font-size:8.9px;color:#2e2e2e;left:230px;width:32.0px;text-align:right;transform:scaleX(0.91);transform-origin:100% 0;">20,88</div>
<div class="t" style="top:356.89px;font-size:8.9px;color:#2e2e2e;left:4.5px;width:18.0px;text-align:center;transform:scaleX(0.91);transform-origin:50% 0;">22</div>
<div class="t" style="left:26.0px;width:178.2px;overflow:hidden;top:356.89px;font-size:8.9px;height:10.9px;color:#2e2e2e"><span style="display:inline-block;transform:scaleX(0.905);transform-origin:0 0;word-spacing:-0.8px">Оклейка обоями стен по монолитной штукатурке</span></div>
<div class="t" style="top:356.89px;font-size:8.9px;color:#2e2e2e;left:206.5px;width:22.5px;text-align:center;transform:scaleX(0.91);transform-origin:50% 0;">2</div>
<div class="t" style="top:356.89px;font-size:8.9px;color:#2e2e2e;left:230px;width:32.0px;text-align:right;transform:scaleX(0.91);transform-origin:100% 0;">25,54</div>
<div class="t" style="top:368.93px;font-size:8.9px;color:#2e2e2e;left:4.5px;width:18.0px;text-align:center;transform:scaleX(0.91);transform-origin:50% 0;">23</div>
<div class="t" style="left:26.0px;width:178.2px;overflow:hidden;top:368.93px;font-size:8.9px;height:10.9px;color:#2e2e2e"><span style="display:inline-block;transform:scaleX(0.905);transform-origin:0 0;word-spacing:-0.8px">Установка ванн купальных прямых: чугунных</span></div>
<div class="t" style="top:368.93px;font-size:8.9px;color:#2e2e2e;left:206.5px;width:22.5px;text-align:center;transform:scaleX(0.91);transform-origin:50% 0;">2</div>
<div class="t" style="top:368.93px;font-size:8.9px;color:#2e2e2e;left:230px;width:32.0px;text-align:right;transform:scaleX(0.91);transform-origin:100% 0;">16,30</div>
<div class="t" style="top:380.97px;font-size:8.9px;color:#2e2e2e;left:4.5px;width:18.0px;text-align:center;transform:scaleX(0.91);transform-origin:50% 0;">24</div>
<div class="t" style="left:26.0px;width:178.2px;overflow:hidden;top:380.97px;font-size:8.9px;height:10.9px;color:#2e2e2e"><span style="display:inline-block;transform:scaleX(0.905);transform-origin:0 0;word-spacing:-0.8px">Установка умывальников одиночных: с подводкой холодной</span></div>
<div class="t" style="top:380.97px;font-size:8.9px;color:#2e2e2e;left:206.5px;width:22.5px;text-align:center;transform:scaleX(0.91);transform-origin:50% 0;">1</div>
<div class="t" style="top:380.97px;font-size:8.9px;color:#2e2e2e;left:230px;width:32.0px;text-align:right;transform:scaleX(0.91);transform-origin:100% 0;">4,96</div>
<div class="t" style="top:393.01px;font-size:8.9px;color:#2e2e2e;left:4.5px;width:18.0px;text-align:center;transform:scaleX(0.91);transform-origin:50% 0;">25</div>
<div class="t" style="left:26.0px;width:178.2px;overflow:hidden;top:393.01px;font-size:8.9px;height:10.9px;color:#2e2e2e"><span style="display:inline-block;transform:scaleX(0.905);transform-origin:0 0;word-spacing:-0.8px">Установка смесителей</span></div>
<div class="t" style="top:393.01px;font-size:8.9px;color:#2e2e2e;left:206.5px;width:22.5px;text-align:center;transform:scaleX(0.91);transform-origin:50% 0;">1</div>
<div class="t" style="top:393.01px;font-size:8.9px;color:#2e2e2e;left:230px;width:32.0px;text-align:right;transform:scaleX(0.91);transform-origin:100% 0;">2,10</div>
<div class="t" style="top:405.05px;font-size:8.9px;color:#2e2e2e;left:4.5px;width:18.0px;text-align:center;transform:scaleX(0.91);transform-origin:50% 0;">26</div>
<div class="t" style="left:26.0px;width:178.2px;overflow:hidden;top:405.05px;font-size:8.9px;height:10.9px;color:#2e2e2e"><span style="display:inline-block;transform:scaleX(0.905);transform-origin:0 0;word-spacing:-0.8px">Установка унитазов: с бачком непосредственно</span></div>
<div class="t" style="top:405.05px;font-size:8.9px;color:#2e2e2e;left:206.5px;width:22.5px;text-align:center;transform:scaleX(0.91);transform-origin:50% 0;">1</div>
<div class="t" style="top:405.05px;font-size:8.9px;color:#2e2e2e;left:230px;width:32.0px;text-align:right;transform:scaleX(0.91);transform-origin:100% 0;">7,39</div>
<div class="abs" style="left:235px;top:192.3px;width:86px;height:25.5px;background:#ffffe1;box-sizing:border-box;border:0.8px solid #6a6a5a;border-right:1.2px solid #3a3a30;border-bottom:1.2px solid #3a3a30;"></div>
<div class="t" style="top:193.65px;font-size:8.9px;left:234.5px;width:87.5px;text-align:center;transform:scaleX(0.87);transform-origin:50% 0;">19 Декабрь 2007 г.</div>
<div class="t" style="top:203.65px;font-size:8.9px;left:234.5px;width:87.5px;text-align:center;transform:scaleX(0.87);transform-origin:50% 0;">Объём = 6,195</div>
<div class="abs" style="left:3.6px;top:470px;width:680.1999999999999px;height:16px;background:#ece9d8"></div>
<div class="abs" style="left:3.6px;top:470px;width:680.1999999999999px;height:1px;background:#f8f7f0"></div>
<div class="panel" style="left:70.8px;top:473.5px;width:83.2px;height:12.5px;background:#efede1;border-top:1px solid #cfccbc;border-left:1px solid #c4c1b0;border-right:1px solid #faf9f4;"></div>
<div class="panel" style="left:218.5px;top:473.5px;width:150px;height:12.5px;background:#efede1;border-top:1px solid #cfccbc;border-left:1px solid #c4c1b0;border-right:1px solid #faf9f4;"></div>
<div class="panel" style="left:370.5px;top:473.5px;width:313.29999999999995px;height:12.5px;background:#efede1;border-top:1px solid #cfccbc;border-left:1px solid #c4c1b0;border-right:1px solid #faf9f4;"></div>
<div class="t" style="top:476.15px;font-size:8.7px;left:9px;transform:scaleX(0.88);transform-origin:0 0;">Начало работы:</div>
<div class="t" style="top:476.15px;font-size:8.7px;left:83px;transform:scaleX(0.88);transform-origin:0 0;">1 Ноябрь 2007 г.</div>
<div class="t" style="top:476.15px;font-size:8.7px;left:168px;transform:scaleX(0.88);transform-origin:0 0;">Исполнение:</div>
<div class="t" style="top:476.15px;font-size:8.7px;left:221.5px;transform:scaleX(0.88);transform-origin:0 0;">2,07  месяца</div>
<div class="t" style="top:476.15px;font-size:8.7px;left:373px;transform:scaleX(0.915);transform-origin:0 0;">19 Декабрь 2007 г.  Оставить в этапе:  1,58  месяца</div>
<svg class="abs" style="left:672px;top:474px" width="12" height="12" viewBox="0 0 12 12"><path d="M11 2 L2 11 M11 5 L5 11 M11 8 L8 11" stroke="#b8b5a5" stroke-width="1"/><path d="M11.6 2.6 L2.6 11.6 M11.6 5.6 L5.6 11.6 M11.6 8.6 L8.6 11.6" stroke="#fff" stroke-width="0.7"/></svg>
</div></body></html>
